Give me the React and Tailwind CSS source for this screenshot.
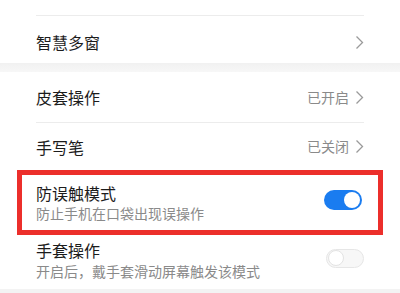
import React from "react";

const Chevron = () => (
  <svg width="9" height="15" viewBox="0 0 9 15" className="ml-1.5">
    <polyline points="1.5,1.5 7.5,7.5 1.5,13.5" fill="none" stroke="#9a9a9a" strokeWidth="1.3" />
  </svg>
);

const Toggle = ({ on }) =>
  on ? (
    <div className="w-[38px] h-[20px] rounded-full bg-[#1a7cf0] flex items-center justify-end pr-[2px]">
      <div className="w-[16px] h-[16px] rounded-full bg-white" />
    </div>
  ) : (
    <div className="w-[38px] h-[19px] rounded-full border border-[#dcdcdc] bg-[#f4f4f4] flex items-center pl-[1px]">
      <div className="w-[16px] h-[16px] rounded-full bg-white border border-[#d8d8d8]" />
    </div>
  );

const LinkRow = ({ title, value, className }) => (
  <div className={`flex items-center justify-between px-9 ${className}`}>
    <span className="text-[16px] text-[#1c1c1c]">{title}</span>
    <div className="flex items-center">
      {value && <span className="text-[14px] text-[#8a8a8a]">{value}</span>}
      <Chevron />
    </div>
  </div>
);

export default function App() {
  const font = { fontFamily: '"Noto Sans CJK SC", "Noto Sans", sans-serif' };
  return (
    <div className="w-[400px] h-[293px] bg-white overflow-hidden" style={font}>
      <div className="h-[15px]" />
      <div className="mx-9 h-px bg-[#ececec]" />
      <LinkRow title="智慧多窗" className="h-[47px] pt-[5px]" />
      <div className="h-[9px] bg-gradient-to-b from-[#f1f1f1] to-[#f7f7f7]" />
      <LinkRow title="皮套操作" value="已开启" className="h-[50px]" />
      <div className="mx-9 h-px bg-[#ececec]" />
      <LinkRow title="手写笔" value="已关闭" className="h-[47px]" />
      <div className="mx-[17px] h-[65px] border-[5px] border-[#ec2f2b] flex items-center justify-between pl-[14px] pr-[16px]">
        <div className="flex flex-col leading-none">
          <span className="text-[16px] text-[#1c1c1c]">防误触模式</span>
          <span className="text-[14px] text-[#8a8a8a] mt-[5px]">防止手机在口袋出现误操作</span>
        </div>
        <div className="-mt-[5px]">
          <Toggle on />
        </div>
      </div>
      <div className="flex items-center justify-between px-9 pt-[7px]">
        <div className="flex flex-col leading-none">
          <span className="text-[16px] text-[#1c1c1c]">手套操作</span>
          <span className="text-[14px] text-[#8a8a8a] mt-[6px]">开启后，戴手套滑动屏幕触发该模式</span>
        </div>
        <div className="-mt-[4px] opacity-70">
          <Toggle />
        </div>
      </div>
      <div className="mt-[11px] h-[4px] bg-[#f3f3f3]" />
    </div>
  );
}
